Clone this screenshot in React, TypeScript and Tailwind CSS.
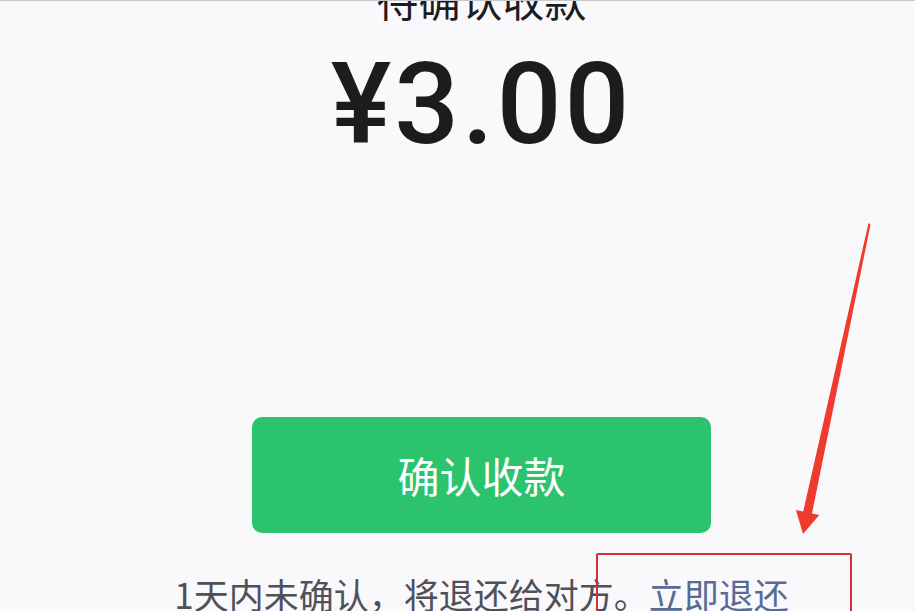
export default function App() {
  const cjk = { fontFamily: '"Noto Sans CJK SC", "Noto Sans", sans-serif' }

  return (
    <div className="relative w-[915px] h-[611px] overflow-hidden bg-[#f9f9fb] border-t border-[#c8c8cc]">
      <div className="flex flex-col items-center pl-[48px]">
        {/* 标题，顶部被截断 */}
        <div className="mt-[-23px] text-[42px] leading-[42px] text-[#1c1c22]" style={cjk}>
          待确认收款
        </div>

        <div
          className="mt-[27px] text-[114px] leading-[114px] font-medium text-[#1c1c1e] tracking-[3px]"
          style={{ fontFamily: 'Roboto, "Liberation Sans", sans-serif' }}
        >
          ¥3.00
        </div>

        <button
          className="mt-[256px] w-[459px] h-[116px] rounded-[10px] bg-[#2bc46d] text-white text-[42px] leading-none"
          style={cjk}
        >
          确认收款
        </button>

        <div className="mt-[43px] text-[35px] leading-[35px] text-[#50505a] whitespace-nowrap" style={cjk}>
          1天内未确认，将退还给对方。<span className="text-[#576b95]">立即退还</span>
        </div>
      </div>

      {/* 标注：红框 */}
      <div className="absolute left-[596px] top-[552px] w-[256px] h-[80px] border-2 border-[#d22f38] rounded-[2px]" />

      {/* 标注：箭头 */}
      <svg className="absolute left-0 top-0" width="915" height="611" viewBox="0 0 915 611">
        <polygon
          points="868.5,222 870.5,223.5 812,512.4 819.3,514 803,533 795.9,509 803.2,510.6"
          fill="#f03a2e"
        />
      </svg>
    </div>
  )
}
